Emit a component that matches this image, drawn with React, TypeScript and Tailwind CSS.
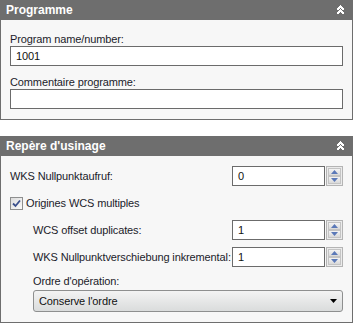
import React from "react";

const font = { fontFamily: '"Liberation Sans", Arial, sans-serif', letterSpacing: "-0.12px" };

function Chevrons() {
  return (
    <svg width="9" height="10" viewBox="0 0 9 10" className="block">
      <polyline points="1,5 4.5,1.5 8,5" fill="none" stroke="#fff" strokeWidth="1.6" shapeRendering="crispEdges" />
      <polyline points="1,9 4.5,5.5 8,9" fill="none" stroke="#fff" strokeWidth="1.6" shapeRendering="crispEdges" />
    </svg>
  );
}

function Header({ title }: { title: string }) {
  return (
    <div className="h-[20px] bg-[#6e6e6e] flex items-center justify-between pl-[6px] pr-[8px]">
      <span className="text-white font-bold text-[12px] leading-none tracking-normal">{title}</span>
      <Chevrons />
    </div>
  );
}

function SpinBtn({ up }: { up: boolean }) {
  return (
    <div className="flex-1 flex items-center justify-center bg-gradient-to-b from-[#f4f4f4] to-[#d9d9d9] border border-[#c4c4c4]">
      <svg width="7" height="4" viewBox="0 0 7 4">
        {up ? <polygon points="0,4 3.5,0 7,4" fill="#5b79b8" /> : <polygon points="0,0 3.5,4 7,0" fill="#5b79b8" />}
      </svg>
    </div>
  );
}

function Spinner({ value }: { value: string }) {
  return (
    <div className="flex h-[20px] gap-[1px] shrink-0">
      <div className="w-[93px] h-[20px] bg-white border border-[#6b6b6b] flex items-center pl-[5px] text-[11px] text-[#111]">
        {value}
      </div>
      <div className="w-[17px] h-[20px] border border-[#b4b4b4] bg-[#ebebeb] flex flex-col p-[1px]">
        <SpinBtn up />
        <SpinBtn up={false} />
      </div>
    </div>
  );
}

function Row({ label, value, indent }: { label: string; value: string; indent?: boolean }) {
  return (
    <div className={`flex items-center justify-between h-[20px] ${indent ? "pl-[23px]" : ""}`}>
      <span className="text-[11px] text-[#1b1b2a] whitespace-nowrap">{label}</span>
      <Spinner value={value} />
    </div>
  );
}

export default function App() {
  return (
    <div className="w-[353px] h-[324px] bg-white" style={font}>
      <Header title="Programme" />
      <div className="bg-[#f7f7f7] border-x border-b border-[#6e6e6e] px-[9px] pt-[12px] pb-[10px]">
        <div className="h-[14px] flex items-center text-[11px] text-[#1b1b2a]">Program name/number:</div>
        <div className="h-[20px] bg-white border border-[#6b6b6b] flex items-center pl-[5px] text-[11px] text-[#111]">1001</div>
        <div className="h-[14px] mt-[9px] flex items-center text-[11px] text-[#1b1b2a]">Commentaire programme:</div>
        <div className="h-[20px] bg-white border border-[#6b6b6b]"></div>
      </div>
      <div className="h-[16px]"></div>
      <Header title="Repère d'usinage" />
      <div className="bg-[#f7f7f7] border-x border-b border-[#6e6e6e] px-[9px] pt-[10px] pb-[10px]">
        <Row label="WKS Nullpunktaufruf:" value="0" />
        <div className="mt-[7px] h-[20px] flex items-center gap-[3px]">
          <div className="w-[13px] h-[13px] border border-[#8e8f8f] bg-gradient-to-br from-[#dcdcdc] to-[#fbfbfb] flex items-center justify-center">
            <svg width="9" height="9" viewBox="0 0 9 9">
              <polyline points="1,4.5 3.5,7 8,1.5" fill="none" stroke="#3a4f8c" strokeWidth="1.8" />
            </svg>
          </div>
          <span className="text-[11px] text-[#1b1b2a]">Origines WCS multiples</span>
        </div>
        <div className="mt-[7px]">
          <Row label="WCS offset duplicates:" value="1" indent />
        </div>
        <div className="mt-[7px]">
          <Row label="WKS Nullpunktverschiebung inkremental:" value="1" indent />
        </div>
        <div className="mt-[7px] h-[14px] pl-[23px] flex items-center text-[11px] text-[#1b1b2a]">Ordre d'opération:</div>
        <div className="mt-[2px] ml-[23px] h-[22px] rounded-[3px] border border-[#8e8f8f] bg-gradient-to-b from-[#f3f3f3] to-[#dadcdc] flex items-center justify-between pl-[5px] pr-[5px]">
          <span className="text-[11px] text-[#111]">Conserve l'ordre</span>
          <svg width="7" height="4" viewBox="0 0 7 4">
            <polygon points="0,0 3.5,4 7,0" fill="#000" />
          </svg>
        </div>
      </div>
    </div>
  );
}
